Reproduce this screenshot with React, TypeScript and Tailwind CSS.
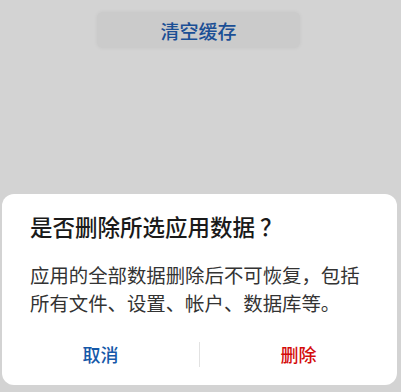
export default function App() {
  return (
    <div
      lang="zh-CN"
      className="h-[392px] w-[401px] bg-[#d3d3d3] flex flex-col overflow-hidden"
      style={{ fontFamily: '"Noto Sans CJK SC", sans-serif' }}
    >
      {/* 背景中的按钮 */}
      <div className="mt-[12px] ml-[97px] w-[203px] h-[36px] rounded-md bg-[#cbcbcb] shadow-[0_0_4px_rgba(0,0,0,0.06)] flex items-center justify-center">
        <span className="text-[19px] leading-none text-[#1b4f95] font-medium">清空缓存</span>
      </div>

      <div className="flex-1" />

      {/* 对话框 */}
      <div className="ml-[2px] mb-[7px] w-[395px] rounded-[12px] bg-white flex flex-col">
        <h2 className="pt-[17px] pl-[28px] text-[22.5px] leading-[30px] font-medium text-[#1a1a1a]">
          是否删除所选应用数据<span className="ml-[5px]">？</span>
        </h2>
        <p className="mt-[20px] pl-[28px] pr-[10px] text-[19.4px] leading-[28px] text-[#333333]">
          应用的全部数据删除后不可恢复，包括
          <br />
          所有文件、设置、帐户、数据库等。
        </p>
        <div className="mt-[18px] mb-[12px] flex items-center h-[38px]">
          <button className="flex-1 text-[18px] font-medium text-[#1558a8] leading-none">取消</button>
          <div className="w-px h-[25px] bg-[#e2e2e2]" />
          <button className="flex-1 text-[18px] font-medium text-[#d40b0b] leading-none">删除</button>
        </div>
      </div>
    </div>
  );
}
